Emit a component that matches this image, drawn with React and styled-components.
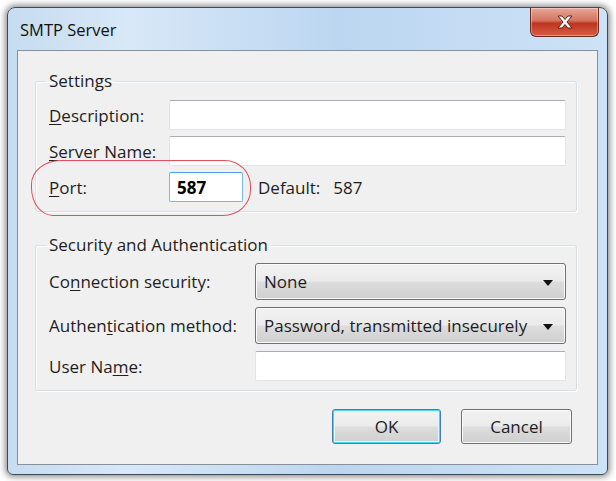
import React from "react";
import styled, { createGlobalStyle } from "styled-components";

const GlobalStyle = createGlobalStyle`
  html, body {
    margin: 0;
    padding: 0;
    background: #ffffff;
  }
  body {
    font-family: "Open Sans", "Noto Sans", sans-serif;
    color: #1e1e1e;
  }
`;

const Page = styled.div`
  width: 616px;
  height: 481px;
  padding: 7px 8px 6px 7px;
  box-sizing: border-box;
`;

const Window = styled.div`
  height: 468px;
  border: 1px solid #3c4a58;
  border-radius: 8px 8px 6px 6px;
  background: linear-gradient(90deg, #c6dcf0 0%, #d8e8f7 20%, #bcd6f1 55%, #cde2f6 100%);
  box-shadow: 0 0 6px 2px rgba(0, 0, 0, 0.45);
  display: flex;
  flex-direction: column;
  padding: 0 9px 9px 9px;
  box-sizing: border-box;
`;

const TitleBar = styled.div`
  height: 42px;
  display: flex;
  align-items: flex-start;
  justify-content: space-between;
`;

const Title = styled.div`
  font-size: 16.5px;
  color: #111;
  padding: 10px 0 0 3px;
`;

const CloseButton = styled.div`
  width: 69px;
  height: 29px;
  margin-right: -1px;
  border: 1px solid #6a2a20;
  border-top: none;
  border-radius: 0 0 6px 6px;
  background: linear-gradient(180deg, #e8a89a 0%, #d3735f 45%, #c0331c 55%, #d2604a 100%);
  box-shadow: inset 0 0 0 1px rgba(255, 255, 255, 0.35);
  display: flex;
  align-items: center;
  justify-content: center;
  box-sizing: border-box;
`;

const Client = styled.div`
  flex: 1;
  background: #f0f0f0;
  border: 1px solid #8a9098;
  padding: 19px 20px 0 17px;
  display: flex;
  flex-direction: column;
  box-sizing: border-box;
`;

const Group = styled.fieldset`
  position: relative;
  margin: 0 0 ${(p) => p.$gap}px 0;
  padding: ${(p) => p.$top}px 10px ${(p) => p.$bottom}px 13px;
  border: 1px solid #d5dfe5;
  border-radius: 3px;
  box-shadow: inset 1px 1px 0 #ffffff, 1px 1px 0 #ffffff;
  display: grid;
  grid-template-columns: ${(p) => p.$labelCol}px 1fr;
  row-gap: ${(p) => p.$rowGap}px;
  align-items: center;
  min-width: 0;
`;

const Legend = styled.legend`
  font-size: 17px;
  line-height: 22px;
  padding: 0 3px;
  margin-left: -3px;
  color: #1e1e1e;
`;

const Label = styled.label`
  font-size: 17px;
  color: #1e1e1e;
  white-space: nowrap;

  u {
    text-decoration: underline;
    text-underline-offset: 2px;
  }
`;

const TextBox = styled.div`
  height: ${(p) => p.$h || 30}px;
  width: ${(p) => (p.$w ? `${p.$w}px` : "auto")};
  box-sizing: border-box;
  background: #ffffff;
  border: 1px solid ${(p) => (p.$focus ? "#7eb4ea" : "#e2e3ea")};
  border-top-color: ${(p) => (p.$focus ? "#569de5" : "#abadb3")};
  border-radius: 2px;
  display: flex;
  align-items: center;
  padding-left: 7px;
  font-size: 17px;
  font-weight: 700;
  color: #000;
`;

const PortRow = styled.div`
  display: flex;
  align-items: center;
`;

const DefaultText = styled.span`
  font-size: 17px;
  margin-left: 15px;
  color: #1e1e1e;

  span {
    margin-left: 13px;
  }
`;

const Select = styled.div`
  height: 37px;
  box-sizing: border-box;
  border: 1px solid #707070;
  border-radius: 3px;
  background: linear-gradient(180deg, #f2f2f2 0%, #ebebeb 48%, #dddddd 52%, #cfcfcf 100%);
  box-shadow: inset 0 0 0 1px #fbfbfb;
  display: flex;
  align-items: center;
  justify-content: space-between;
  padding: 0 12px 0 8px;
  font-size: 17px;
  color: #1e1e1e;
`;

const Arrow = styled.span`
  width: 0;
  height: 0;
  border-left: 5px solid transparent;
  border-right: 5px solid transparent;
  border-top: 6px solid #111;
  margin-top: 2px;
`;

const ButtonRow = styled.div`
  display: flex;
  justify-content: flex-end;
  gap: 20px;
  padding-right: 5px;
`;

const Button = styled.div`
  width: ${(p) => p.$w}px;
  height: 35px;
  box-sizing: border-box;
  border: 1px solid ${(p) => (p.$default ? "#3c7fb1" : "#707070")};
  border-radius: 3px;
  background: linear-gradient(180deg, #f2f2f2 0%, #ebebeb 48%, #dddddd 52%, #cfcfcf 100%);
  box-shadow: ${(p) =>
    p.$default ? "inset 0 0 0 1px #48d4f4, inset 0 0 0 2px #e6f4fb" : "inset 0 0 0 1px #fbfbfb"};
  display: flex;
  align-items: center;
  justify-content: center;
  font-size: 17px;
  color: #1e1e1e;
`;

const Highlight = styled.div`
  position: absolute;
  left: -5px;
  top: 68px;
  width: 218px;
  height: 54px;
  border: 1.5px solid #e0505a;
  border-radius: 30px 26px 28px 22px / 24px 26px 26px 28px;
  pointer-events: none;
`;

const CloseGlyph = () => (
  <svg width="18" height="14" viewBox="0 0 18 14">
    <path
      d="M2 1 L6 1 L9 4.5 L12 1 L16 1 L11 7 L16 13 L12 13 L9 9.5 L6 13 L2 13 L7 7 Z"
      fill="#ffffff"
      stroke="#5a2418"
      strokeWidth="1"
      strokeLinejoin="round"
    />
  </svg>
);

export default function App() {
  return (
    <>
      <GlobalStyle />
      <Page>
        <Window>
          <TitleBar>
            <Title>SMTP Server</Title>
            <CloseButton>
              <CloseGlyph />
            </CloseButton>
          </TitleBar>
          <Client>
            <Group $gap={22} $top={8} $bottom={9} $labelCol={120} $rowGap={6}>
              <Legend>Settings</Legend>
              <Label>
                <u>D</u>escription:
              </Label>
              <TextBox />
              <Label>
                <u>S</u>erver Name:
              </Label>
              <TextBox />
              <Label>
                <u>P</u>ort:
              </Label>
              <PortRow>
                <TextBox $w={74} $focus>587</TextBox>
                <DefaultText>
                  Default:<span>587</span>
                </DefaultText>
              </PortRow>
              <Highlight />
            </Group>
            <Group $gap={18} $top={7} $bottom={9} $labelCol={206} $rowGap={7}>
              <Legend>Security and Authentication</Legend>
              <Label>
                Co<u>n</u>nection security:
              </Label>
              <Select>
                None
                <Arrow />
              </Select>
              <Label>
                Authen<u>t</u>ication method:
              </Label>
              <Select>
                Password, transmitted insecurely
                <Arrow />
              </Select>
              <Label>
                User Na<u>m</u>e:
              </Label>
              <TextBox />
            </Group>
            <ButtonRow>
              <Button $w={109} $default>
                OK
              </Button>
              <Button $w={111}>Cancel</Button>
            </ButtonRow>
          </Client>
        </Window>
      </Page>
    </>
  );
}
